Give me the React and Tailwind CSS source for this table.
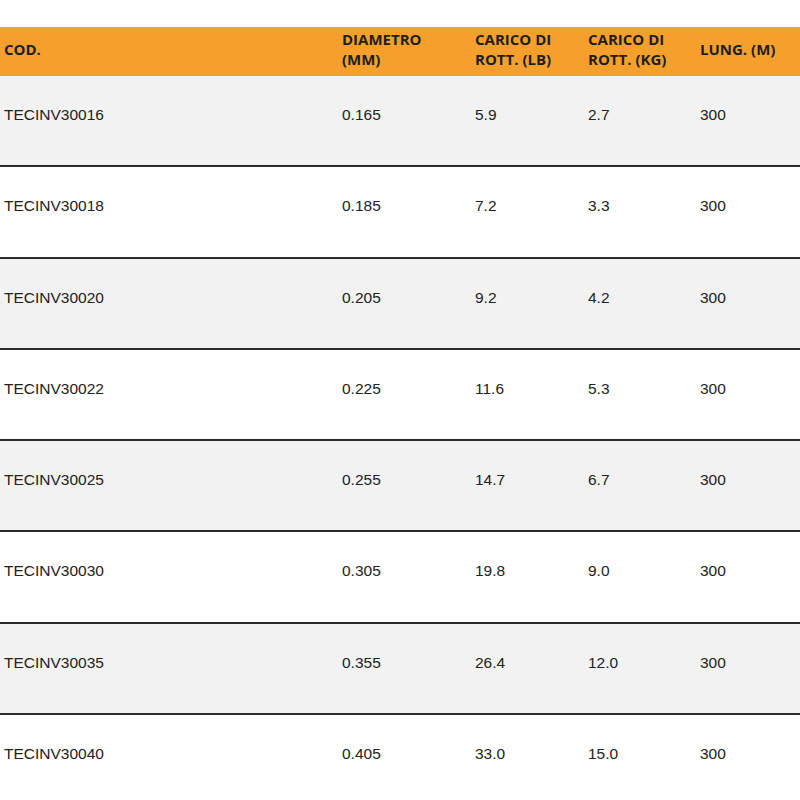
const rows = [
  ['TECINV30016', '0.165', '5.9', '2.7', '300'],
  ['TECINV30018', '0.185', '7.2', '3.3', '300'],
  ['TECINV30020', '0.205', '9.2', '4.2', '300'],
  ['TECINV30022', '0.225', '11.6', '5.3', '300'],
  ['TECINV30025', '0.255', '14.7', '6.7', '300'],
  ['TECINV30030', '0.305', '19.8', '9.0', '300'],
  ['TECINV30035', '0.355', '26.4', '12.0', '300'],
  ['TECINV30040', '0.405', '33.0', '15.0', '300'],
];

const cols = 'grid grid-cols-[338px_133px_113px_112px_1fr]';

export default function App() {
  return (
    <div className="w-[800px] h-[800px] overflow-hidden bg-white pt-[27px]">
      <div
        className={`${cols} h-[49px] items-center pb-[6px] bg-[#f5a02c] text-[15px] font-bold leading-5 text-[#1e1e1e]`}
        style={{ fontFamily: '"Open Sans", sans-serif' }}
      >
        <div className="pl-1">COD.</div>
        <div className="pl-1">DIAMETRO<br />(MM)</div>
        <div className="pl-1">CARICO DI<br />ROTT. (LB)</div>
        <div className="pl-1">CARICO DI<br />ROTT. (KG)</div>
        <div className="pl-1">LUNG. (M)</div>
      </div>

      {rows.map((row, i) => (
        <div
          key={row[0]}
          className={`${cols} h-[91.3px] border-b-2 border-[#2b2b2b] pt-[29px] text-[15.5px] leading-5 text-[#222] ${
            i % 2 === 0 ? 'bg-[#f2f2f2]' : 'bg-white'
          }`}
          style={{ fontFamily: '"Liberation Sans", Arial, sans-serif' }}
        >
          {row.map((cell, j) => (
            <div key={j} className="pl-1">{cell}</div>
          ))}
        </div>
      ))}
    </div>
  );
}
